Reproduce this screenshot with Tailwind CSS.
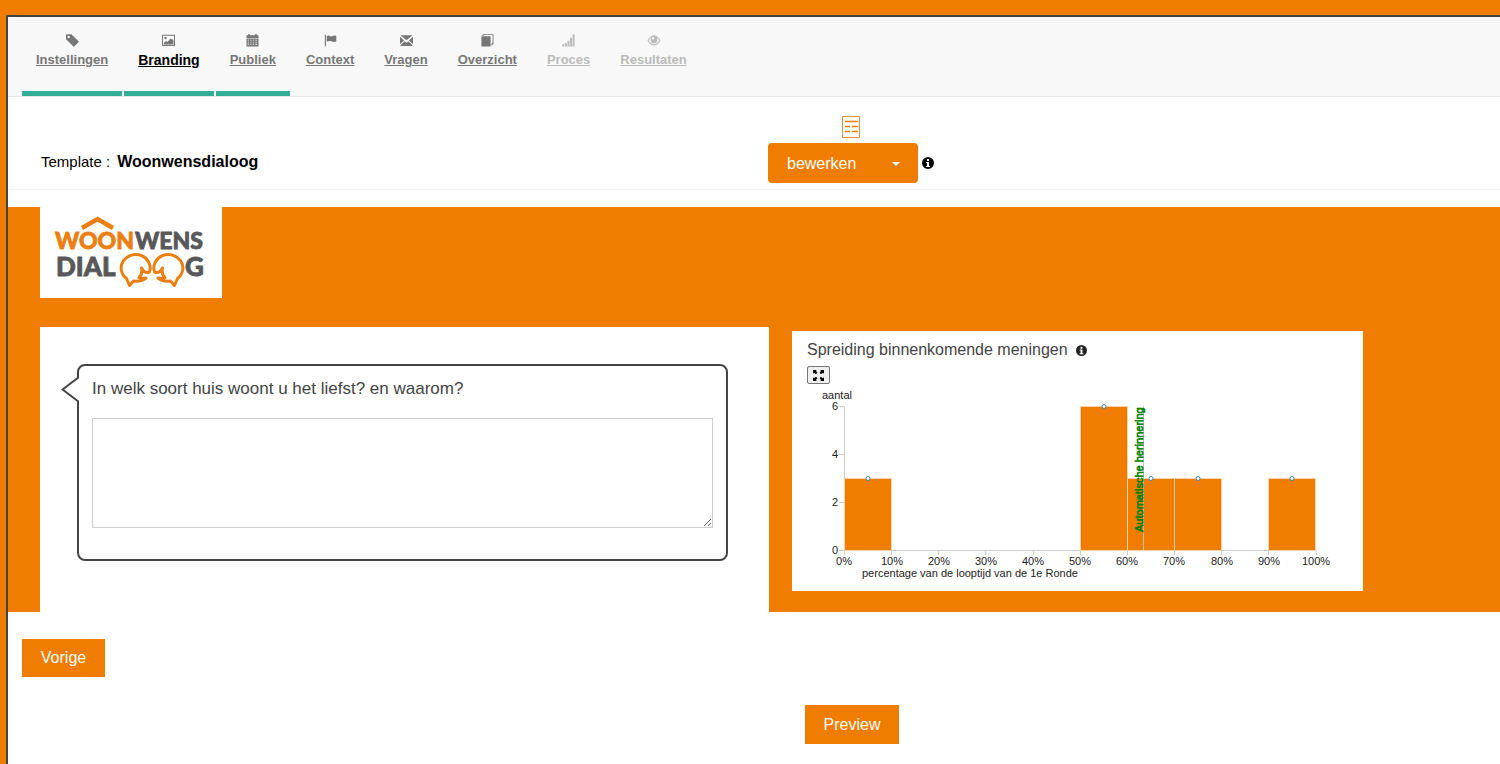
<!DOCTYPE html>
<html lang="nl">
<head>
<meta charset="utf-8">
<meta name="viewport" content="width=device-width, initial-scale=1">
<title>Woonwensdialoog</title>
<script src="https://cdn.jsdelivr.net/npm/@tailwindcss/browser@4"></script>
</head>
<body class="bg-[#f07d00] font-['Liberation_Sans',Arial,sans-serif] text-black">
<svg class="hidden" aria-hidden="true">
  <symbol id="info" viewBox="0 0 12 12">
    <path fill-rule="evenodd" d="M6 0a6 6 0 1 0 0 12A6 6 0 0 0 6 0ZM5 2h2v2H5ZM4 5h3v4h1v1H4V9h1V6H4Z"/>
  </symbol>
</svg>
<div class="pl-1.5 pt-[15px]">
<div class="flex min-h-[calc(100vh-15px)] flex-col border-l-2 border-t-2 border-[#444] bg-white">

  <nav class="flex h-20 gap-0.5 border-b border-[#e7e7e7] bg-[#f8f8f8] pl-3.5 text-[13px] leading-4 font-bold text-[#777]">
    <a href="#" class="flex flex-col items-center gap-[5px] border-b-5 border-[#32ae97] px-3.5 pt-[17px]">
      <svg class="size-[13px]" viewBox="0 0 13 13" fill="currentColor"><path fill-rule="evenodd" d="M0 1.2Q0 .3 .9 .3H5.4L12.8 7.4Q13 7.8 12.7 8.1L8.3 12.5Q7.9 12.8 7.5 12.5L0 5.2ZM2.7 1.7a1.2 1.2 0 1 0 0 2.4a1.2 1.2 0 0 0 0-2.4Z"/></svg>
      <span class="underline">Instellingen</span></a>
    <a href="#" class="flex flex-col items-center gap-[5px] border-b-5 border-[#32ae97] px-3.5 pt-[17px]">
      <svg class="size-[13px]" viewBox="0 0 13 13" fill="currentColor"><path fill-rule="evenodd" d="M0 .8H13V12H0ZM1 1.8V11H12V1.8Z"/><circle cx="3.5" cy="4" r="1.2"/><path d="M1.7 10.5V9L4 7l1.6 1L8.4 4.4l1.4 1.2.7-.6 1 1.5v4Z"/></svg>
      <span class="text-sm leading-4 text-black underline">Branding</span></a>
    <a href="#" class="flex flex-col items-center gap-[5px] border-b-5 border-[#32ae97] px-3.5 pt-[17px]">
      <svg class="size-[13px]" viewBox="0 0 13 13" fill="currentColor"><path fill-rule="evenodd" d="M.5 1.3H2V.2H4V1.3H9V.2H11V1.3H12.5V4H.5ZM.5 4.6H12.5V12.4H.5ZM1.7 5.7V6.5H3V5.7ZM4.200 5.700V6.500H5.500V5.700ZM6.800 5.700V6.500H8.100V5.700ZM9.300 5.700V6.500H11V5.700ZM1.700 7.700V8.500H3V7.700ZM4.200 7.700V8.500H5.500V7.700ZM6.800 7.700V8.500H8.100V7.700ZM9.300 7.700V8.500H11V7.700ZM1.700 9.800V10.800H3V9.800ZM4.200 9.800V10.800H5.500V9.800ZM6.800 9.800V10.800H8.100V9.800ZM9.300 9.800V10.800H11V9.800Z"/></svg>
      <span class="underline">Publiek</span></a>
    <a href="#" class="flex flex-col items-center gap-[5px] px-3.5 pt-[17px]">
      <svg class="size-[13px]" viewBox="0 0 13 13" fill="currentColor"><path d="M.8.8H1.9V12.3H.8ZM2.7 2Q4.6.8 6.5 2.2Q7.5 2.8 8.5 2L11 1.6L12.3 2V7.5Q10 8.3 8 7.5Q5.5 6.3 2.7 7.8Z"/></svg>
      <span class="underline">Context</span></a>
    <a href="#" class="flex flex-col items-center gap-[5px] px-3.5 pt-[17px]">
      <svg class="size-[13px]" viewBox="0 0 13 13" fill="currentColor"><path d="M.5 1.2H12.5L6.500 6.300ZM0 2.500L4 6.400L0 10.300ZM13 2.500V10.300L9 6.400ZM4.600 7.200L6.500 8.800L8.400 7.200L12.500 11.300V12H.5V11.300Z"/></svg>
      <span class="underline">Vragen</span></a>
    <a href="#" class="flex flex-col items-center gap-[5px] px-3.5 pt-[17px]">
      <svg class="size-[13px]" viewBox="0 0 13 13" fill="currentColor"><path d="M.4 2.3H9.6V12.4H.4ZM.4 1.8L2.2.2H12.5V9.8L10.8 11.5H10.3V9.9L11.6 8.8V1.1H2.9L2.1 1.8Z"/></svg>
      <span class="underline">Overzicht</span></a>
    <a href="#" class="flex flex-col items-center gap-[5px] px-3.5 pt-[17px] text-[#bbb]">
      <svg class="size-[13px]" viewBox="0 0 13 13" fill="currentColor"><path d="M.2 10.3H2.200V12.4H.2ZM2.800 9H4.800V12.4H2.800ZM5.400 6.800H7.400V12.4H5.400ZM8 3.800H10V12.4H8ZM10.600.5H12.600V12.4H10.600Z"/></svg>
      <span class="underline">Proces</span></a>
    <a href="#" class="flex flex-col items-center gap-[5px] px-3.5 pt-[17px] text-[#bbb]">
      <svg class="h-[13px] w-3.5" viewBox="0 0 13 13" fill="currentColor"><path fill-rule="evenodd" d="M0 6.5Q3 1.3 6.5 1.3T13 6.5Q10 11.5 6.5 11.5T0 6.5ZM1.300 6.500Q3.500 10.200 6.500 10.200T11.700 6.500Q11 4.800 9.300 3.600Q10 5 9.800 6.100A3.300 3.300 0 0 1 3.200 6.100Q3 5 3.700 3.600Q2 4.800 1.300 6.500ZM6 3A1.600 1.600 0 0 0 4.600 5.200L5.800 5.700L6.800 4.400Z"/></svg>
      <span class="underline">Resultaten</span></a>
  </nav>

  <div class="grid h-[93px] grid-cols-2 border-b border-[#f4f4f4]">
    <p class="flex items-baseline gap-[7px] pl-[33px] pt-[55px] text-[15px] leading-5">Template : <b class="text-base leading-5">Woonwensdialoog</b></p>
    <div class="flex flex-col items-start pl-3.5 pt-[19px]">
      <svg class="ml-[74px] h-[22px] w-[18px]" viewBox="0 0 18 22" fill="none" stroke="#e0903c"><path d="M.5.5H17.5V21.5H.5Z"/><path stroke="#f07d00" stroke-width="1.300" d="M3 5.500H16M3 10.500H8M10 10.500H16M3 15.500H8M10 15.500H16"/></svg>
      <div class="mt-[5px] flex items-center gap-1">
        <button type="button" class="flex h-10 w-[150px] items-center justify-between rounded bg-[#f07d00] pl-[19px] pr-[18px] pt-0.5 text-base text-white">bewerken
          <svg class="h-1 w-2" viewBox="0 0 8 4" fill="#fff"><path d="M0 0H8L4 4Z"/></svg>
        </button>
        <svg class="size-3" role="img" aria-label="Info"><use href="#info"/></svg>
      </div>
    </div>
  </div>

  <main class="mt-[17px]">
    <section class="bg-[#f07d00] pl-8 pr-0.5">
      <div class="h-[91px] w-[182px] bg-white">
        <svg class="h-full w-full font-['Lato',sans-serif]" viewBox="0 0 182 91" role="img" aria-label="Woonwens Dialoog" font-weight="900" stroke-width=".8">
          <path d="M42 21L57.5 12L73 21" fill="none" stroke="#ec7f14" stroke-width="4.5"/>
          <text x="15" y="42" font-size="23" fill="#ec7f14" stroke="#ec7f14">WOON</text>
          <text x="95" y="42" font-size="23" fill="#58585a" stroke="#58585a">WENS</text>
          <text x="16" y="69" font-size="26" fill="#58585a" stroke="#58585a">DIAL</text>
          <text x="145" y="69" font-size="26" fill="#58585a" stroke="#58585a">G</text>
          <g fill="none" stroke="#ec7f14" stroke-width="3" stroke-linejoin="round">
            <path id="balloon" d="M109.500 65A14.500 13.500 0 1 0 86.500 71.500L89.500 78.500L93.500 74Q101 75 106 71Q101 72 99 70.500Q103 67 101.500 61Q104.500 67 109.500 65Z"/>
            <use href="#balloon" transform="translate(224 0) scale(-1 1)"/>
          </g>
        </svg>
      </div>
      <div class="mt-[29px] grid grid-cols-2">
        <div class="bg-white pb-[51px] pl-[37px] pr-[41px] pt-[37px]">
          <div class="relative rounded-lg border-2 border-[#444] px-[13px] pb-[31px] pt-[11px]">
            <svg class="absolute -left-[18px] top-2.5 h-7 w-[18px]" viewBox="0 0 18 28"><path d="M18 1L1.500 13.500L18 26" fill="#fff" stroke="#444" stroke-width="2"/></svg>
            <label for="antwoord" class="block text-[17px] leading-6 text-[#444]">In welk soort huis woont u het liefst? en waarom?</label>
            <textarea id="antwoord" class="mt-[17px] block h-[110px] w-full border border-[#ccc] bg-white"></textarea>
          </div>
        </div>
        <div class="pl-[23px] pt-1">
          <div class="h-[260px] w-full max-w-[571px] bg-white pl-[15px] pt-[9px]">
            <h2 class="flex items-center gap-2 text-base leading-5 text-[#444]">Spreiding binnenkomende meningen
              <svg class="size-[11px]" fill="#222" role="img" aria-label="Info"><use href="#info"/></svg></h2>
            <button type="button" aria-label="Vergroten" class="mt-1.5 flex h-[18px] w-[23px] items-center justify-center rounded-xs border border-[#767676] bg-[#efefef]">
              <svg class="size-[11px]" viewBox="0 0 12 12"><path d="M0 0H4.200L3.200 1L4.800 3L3.300 4.600L1.200 3L0 4.200ZM12 0V4.200L10.800 3L8.700 4.600L7.200 3L8.800 1L7.800 0ZM0 12V7.800L1.200 9L3.300 7.400L4.800 9L3.200 11L4.200 12ZM12 12H7.800L8.800 11L7.200 9L8.700 7.400L10.800 9L12 7.800Z"/></svg>
            </button>
            <svg class="mt-0.5 block h-[196px] w-[530px]" viewBox="0 0 530 196" font-size="11" fill="#222" role="img" aria-label="Spreiding binnenkomende meningen">
              <path d="M32 20.500H37.500V164.500H509.500M32 68.500H37M32 116.500H37M32 164.500H37M37.500 165V169M84.500 165V169M131.500 165V169M178.500 165V169M226.500 165V169M273.500 165V169M320.500 165V169M367.500 165V169M414.500 165V169M461.500 165V169M509.500 165V169" fill="none" stroke="#ccc"/>
              <g fill="#f07d00" stroke="#fbd3a6">
                <path d="M37.500 92.500H84.500V164.500H37.500ZM273.500 20.500H320.500V164.500H273.500ZM320.500 92.500H367.500V164.500H320.500ZM367.500 92.500H414.500V164.500H367.500ZM461.500 92.500H508.500V164.500H461.500Z"/>
              </g>
              <path d="M336.500 20V164" stroke="#c9bfa8"/>
              <g fill="#fff" stroke="#4682b4"><circle cx="61" cy="92.500" r="2"/><circle cx="297" cy="20.500" r="2"/><circle cx="344" cy="92.500" r="2"/><circle cx="391" cy="92.500" r="2"/><circle cx="485" cy="92.500" r="2"/></g>
              <text x="15" y="13">aantal</text>
              <g text-anchor="end"><text x="31" y="24">6</text><text x="31" y="72">4</text><text x="31" y="120">2</text><text x="31" y="168">0</text></g>
              <g text-anchor="middle"><text x="37" y="179">0%</text><text x="85" y="179">10%</text><text x="132" y="179">20%</text><text x="179" y="179">30%</text><text x="226" y="179">40%</text><text x="273" y="179">50%</text><text x="320" y="179">60%</text><text x="367" y="179">70%</text><text x="415" y="179">80%</text><text x="462" y="179">90%</text><text x="509" y="179">100%</text></g>
              <text x="55" y="191">percentage van de looptijd van de 1e Ronde</text>
              <text transform="translate(336 146) rotate(-90)" fill="green" stroke="green" stroke-width=".6">Automatische herinnering</text>
            </svg>
          </div>
        </div>
      </div>
    </section>

    <div class="px-3.5 pt-[27px]">
      <button type="button" class="block h-[38px] w-[83px] bg-[#f07d00] text-base text-white">Vorige</button>
    </div>
    <div class="grid grid-cols-2 pt-7">
      <button type="button" class="col-start-2 ml-[51px] h-[39px] w-[94px] bg-[#f07d00] text-base text-white">Preview</button>
    </div>
  </main>
</div>
</div>
</body>
</html>
